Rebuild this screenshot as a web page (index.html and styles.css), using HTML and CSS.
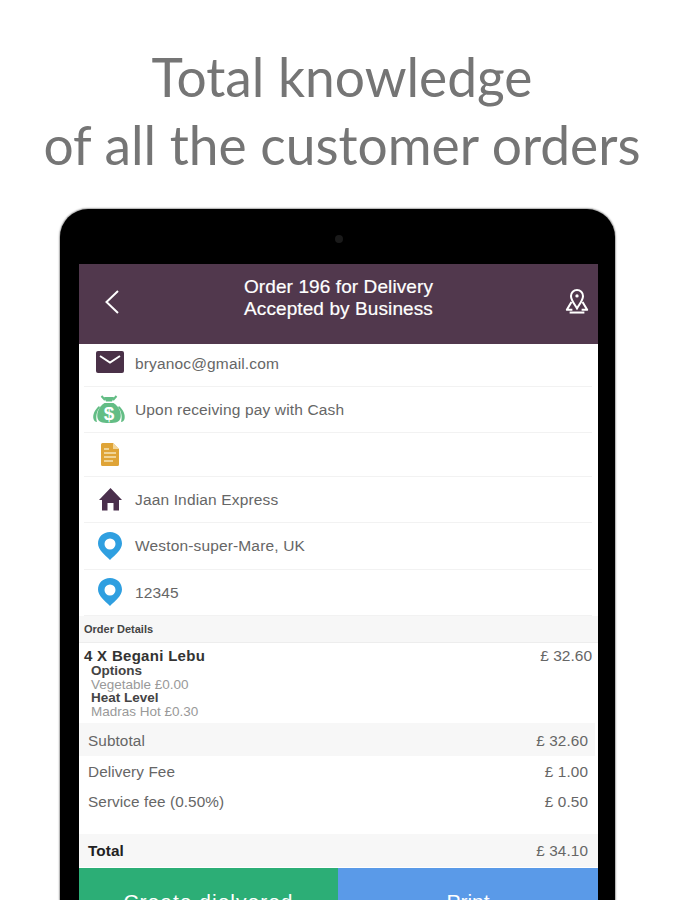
FILE: index.html
```html
<!DOCTYPE html>
<html lang="en">
<head>
<meta charset="utf-8">
<title>Order details</title>
<link rel="stylesheet" href="styles.css">
</head>
<body>
<main class="shot">
  <h1 class="headline">Total knowledge<br>of all the customer orders</h1>
  <div class="tablet">
    <div class="camera-bar"><span class="camera"></span></div>
    <div class="screen">
      <header class="appbar">
        <div class="slot slot-left"><svg class="back" width="18" height="26" viewBox="0 0 18 26"><path d="M15 2 L3.500 13 L15 24" fill="none" stroke="#fff" stroke-width="2"/></svg></div>
        <div class="appbar-title">Order 196 for Delivery<br>Accepted by Business</div>
        <div class="slot slot-right"><svg class="map-pin" width="24" height="26" viewBox="0 0 26 28"><path d="M13 2a6.500 6.500 0 0 0-6.500 6.500C6.500 13 10 17 13 22c3-5 6.500-9 6.500-13.500A6.500 6.500 0 0 0 13 2z" fill="none" stroke="#fff" stroke-width="2.200"/><circle cx="13" cy="8.500" r="1.800" fill="#fff"/><path d="M7 15 L2 23.500 H8 M19 15 L24 23.500 H18" fill="none" stroke="#fff" stroke-width="2.200" stroke-linejoin="round"/><path d="M5 26.500 H21" stroke="#fff" stroke-width="2.200"/></svg></div>
      </header>
      <ul class="info">
        <li class="info-row r-mail">
          <svg class="icon" width="28" height="22" viewBox="0 0 28 22"><rect width="28" height="22" rx="2" fill="#4a3148"/><path d="M4 5 L14 11.500 L24 5" fill="none" stroke="#fff" stroke-width="2"/></svg>
          <span>bryanoc@gmail.com</span>
        </li>
        <li class="info-row r-pay">
          <svg class="icon" width="34" height="29" viewBox="0 0 33 29"><path d="M9 1l3.500 4M24 1l-3.500 4" stroke="#63bd85" stroke-width="2"/><path d="M11.500 2h10l-2 4.500h-6z" fill="#63bd85"/><path d="M12 8h9c6 4 8 10 7 15-1 4-4 5-11.500 5S6 27 5 23C4 18 6 12 12 8z" fill="#63bd85"/><path d="M6.500 11C2 15 0 20 1 24c.5 2 2 3 3.500 3-1.500-5-.5-11 3-14.500zM26.500 11c4.500 4 6.500 9 5.500 13-.5 2-2 3-3.500 3 1.500-5 .5-11-3-14.500z" fill="#63bd85"/><text x="16.500" y="25" text-anchor="middle" class="dollar">$</text></svg>
          <span>Upon receiving pay with Cash</span>
        </li>
        <li class="info-row r-note">
          <svg class="icon" width="18" height="23" viewBox="0 0 18 23"><path d="M1.500 0H12l6 6v15.500a1.500 1.500 0 0 1-1.500 1.500h-15A1.500 1.500 0 0 1 0 21.500v-20A1.500 1.500 0 0 1 1.500 0z" fill="#dfa437"/><path d="M12 0v6h6z" fill="#f3d79c"/><path d="M3 6h5M3 10h12M3 14h12M3 18h9" stroke="#f6e3b8" stroke-width="1.500"/></svg>
          <span></span>
        </li>
        <li class="info-row r-home">
          <svg class="icon" width="23" height="23" viewBox="0 0 23 23"><path d="M11.500 0L23 12h-3v10.500h-5.500V15h-6v7.500H3V12H0z" fill="#4a2f4c"/></svg>
          <span>Jaan Indian Express</span>
        </li>
        <li class="info-row r-loc">
          <svg class="icon" width="24" height="28" viewBox="0 0 24 28"><path fill-rule="evenodd" d="M12 0C5 0 0 5 0 11.500 0 18 7 23 12 28c5-5 12-10 12-16.500C24 5 19 0 12 0zm0 6.500a5.500 5.500 0 1 1 0 11 5.500 5.500 0 0 1 0-11z" fill="#2f9fe0"/></svg>
          <span>Weston-super-Mare, UK</span>
        </li>
        <li class="info-row r-loc">
          <svg class="icon" width="24" height="28" viewBox="0 0 24 28"><path fill-rule="evenodd" d="M12 0C5 0 0 5 0 11.500 0 18 7 23 12 28c5-5 12-10 12-16.500C24 5 19 0 12 0zm0 6.500a5.500 5.500 0 1 1 0 11 5.500 5.500 0 0 1 0-11z" fill="#2f9fe0"/></svg>
          <span>12345</span>
        </li>
      </ul>
      <div class="section-head">Order Details</div>
      <div class="item">
        <div class="item-body">
          <div class="item-name">4 X Begani Lebu</div>
          <div class="opt-label">Options</div>
          <div class="opt-value">Vegetable £0.00</div>
          <div class="opt-label">Heat Level</div>
          <div class="opt-value">Madras Hot £0.30</div>
        </div>
        <div class="item-price">£ 32.60</div>
      </div>
      <div class="line shaded line-sub"><span>Subtotal</span><span>£ 32.60</span></div>
      <div class="line line-fee"><span>Delivery Fee</span><span>£ 1.00</span></div>
      <div class="line line-service"><span>Service fee (0.50%)</span><span>£ 0.50</span></div>
      <div class="line shaded line-total"><strong>Total</strong><span>£ 34.10</span></div>
      <div class="actions">
        <div class="action green">Create dielvered</div>
        <div class="action blue">Print</div>
      </div>
    </div>
  </div>
</main>
</body>
</html>
```

FILE: styles.css
```css
* { box-sizing: border-box; }
html, body { margin: 0; padding: 0; }
body { width: 675px; height: 900px; overflow: hidden; background: #fff; font-family: "Liberation Sans", Arial, sans-serif; }
.shot { height: 900px; overflow: hidden; display: flex; flex-direction: column; }
.headline { margin: 42px 0 0; padding-left: 9px; flex: none; font-family: Lato, sans-serif; font-weight: 400; font-size: 53.300px; line-height: 68px; color: #757575; text-align: center; white-space: nowrap; width: 675px; height: 164px; }
.tablet { width: 555px; height: 691px; flex: none; margin: 3px 0 0 60px; background: #000; border-radius: 28px 28px 0 0; box-shadow: 0 0 1.500px 1px #a8a8a8; padding: 0 17px 0 19px; }
.camera-bar { height: 55px; display: flex; align-items: center; justify-content: center; padding-top: 5px; }
.camera { width: 8px; height: 8px; border-radius: 50%; background: #1a1a1a; }
.screen { background: #fff; height: 636px; display: flex; flex-direction: column; overflow: hidden; }
.appbar { height: 80px; flex: none; background: #51384d; display: flex; align-items: center; color: #fff; }
.slot { width: 60px; flex: none; display: flex; }
.slot-left { padding-left: 24px; }
.slot-right { justify-content: flex-end; padding-right: 9px; }
.appbar-title { flex: 1; font-size: 19px; line-height: 22px; text-align: center; color: #fff; margin-top: -12px; font-weight: 400; letter-spacing: .1px; -webkit-text-stroke: .2px #fff; }
.back { margin-top: -4px; }
.map-pin { margin-top: -6px; }
.info { list-style: none; margin: 0; padding: 0 6px 0 5px; }
.info-row { display: flex; align-items: center; border-bottom: 1px solid #f2f2f2; font-size: 15.500px; color: #666; padding-left: 7px; position: relative; }
.info-row span { position: absolute; left: 51px; letter-spacing: .15px; }
.icon { display: block; flex: none; }
.r-mail { height: 43px; }
.r-mail span { margin-top: -2px; }
.r-mail .icon { margin: -6px 0 0 5px; }
.r-pay { height: 46px; }
.r-pay .icon { margin-left: 1px; }
.r-note { height: 44px; }
.r-note .icon { margin-left: 10px; }
.r-home { height: 46px; }
.r-home span { margin-top: 1px; }
.r-home .icon { margin-left: 8px; }
.r-loc { height: 46.500px; }
.r-loc span { margin-top: 1px; }
.r-loc .icon { margin-left: 7px; }
.section-head { height: 27px; flex: none; background: #f7f7f7; border-bottom: 1px solid #ededed; font-size: 11px; font-weight: 700; color: #444; line-height: 27px; padding-left: 5px; }
.item { height: 80px; flex: none; display: flex; justify-content: space-between; padding: 5px 6px 0 5px; }
.item-name { font-size: 15px; font-weight: 700; line-height: 16px; color: #333; letter-spacing: .3px; }
.opt-label { font-size: 13.500px; font-weight: 700; line-height: 13.500px; color: #444; padding-left: 7px; }
.opt-value { font-size: 13.500px; line-height: 13.500px; color: #999; padding-left: 7px; }
.item-price { font-size: 15.500px; line-height: 16px; color: #666; }
.line { display: flex; justify-content: space-between; align-items: center; flex: none; font-size: 15.300px; color: #666; padding: 0 10px 0 9px; letter-spacing: .1px; }
.shaded { background: #f7f7f7; }
.line-sub { height: 33px; margin-right: 3px; padding-right: 7px; padding-top: 2px; }
.line-fee { height: 31px; }
.line-service { height: 30px; }
.line-total { height: 33px; margin-top: 17px; }
.line-total strong { color: #222; font-size: 15.300px; }
.actions { flex: none; display: flex; height: 60px; border-top: 1px solid #fff; }
.action { color: #fff; font-size: 21px; text-align: center; padding-top: 22px; }
.green { flex: 0 0 259px; background: #2cae76; letter-spacing: 1px; }
.blue { flex: 1; background: #5a9ae8; }
.dollar { font: 700 19px "Liberation Sans", sans-serif; fill: #fff; }
```
